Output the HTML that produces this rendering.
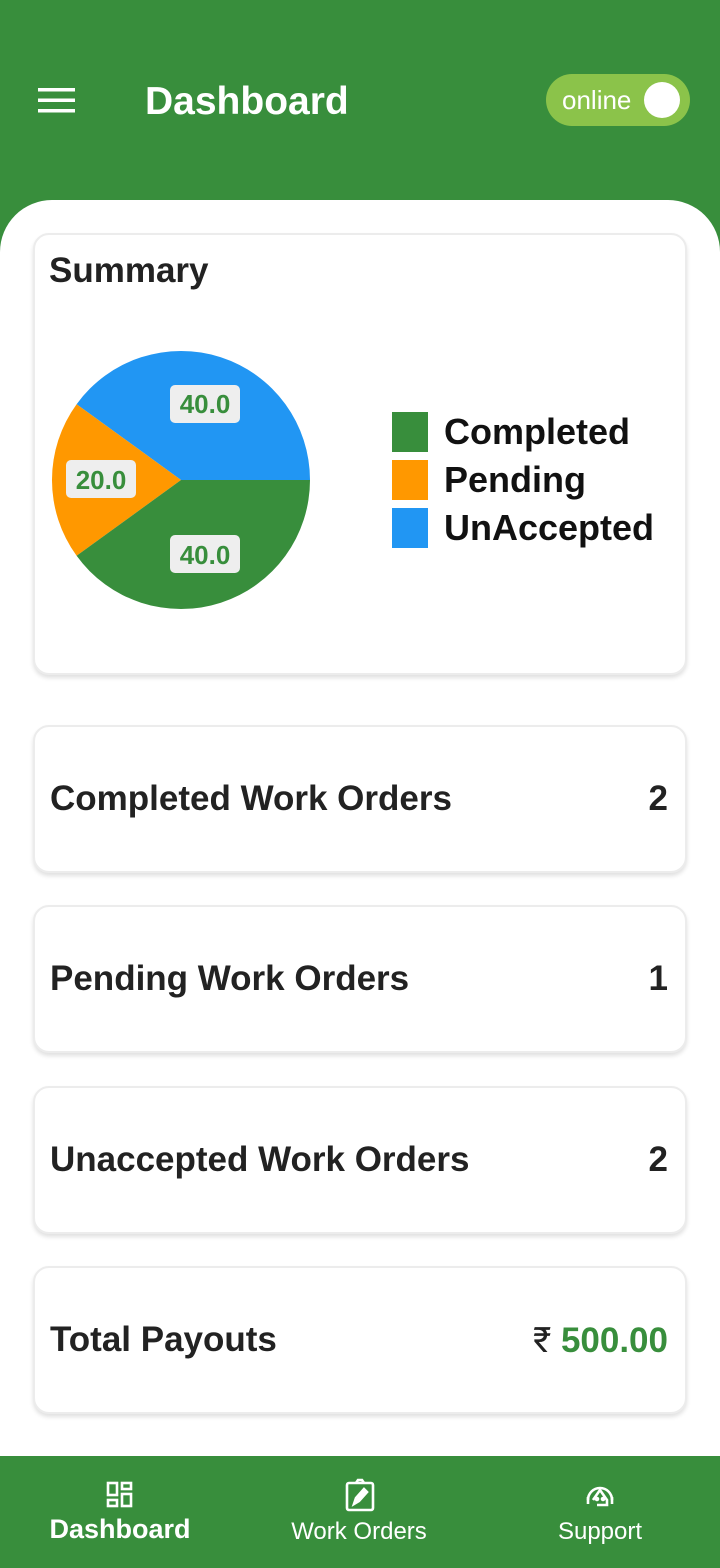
<!DOCTYPE html>
<html><head><meta charset="utf-8"><style>
*{margin:0;padding:0;box-sizing:border-box}
body{width:720px;height:1568px;background:#388E3C;font-family:"Liberation Sans",Roboto,sans-serif;position:relative;overflow:hidden}
.panel{position:absolute;left:0;top:200px;width:720px;height:1256px;background:#fff;border-radius:52px 52px 0 0}
.card{position:absolute;left:33px;width:654px;background:#fff;border:2px solid #ececec;border-radius:16px;box-shadow:0 3px 4px rgba(0,0,0,.12)}
.row{display:flex;align-items:center;justify-content:space-between;padding:0 17px 0 15px;font-size:35px;font-weight:bold;color:#222;height:144px}
.nav{position:absolute;left:0;top:1456px;width:720px;height:112px;background:#388E3C;color:#fff}
.nav div{position:absolute;text-align:center;width:240px}
</style></head><body>
<svg style="position:absolute;left:38px;top:88px" width="37" height="26"><rect y="0" width="37" height="3.5" fill="#fff"/><rect y="10.5" width="37" height="3.5" fill="#fff"/><rect y="21" width="37" height="3.5" fill="#fff"/></svg>
<div style="position:absolute;left:145px;top:80px;color:#fff;font-size:39px;font-weight:bold">Dashboard</div>
<div style="position:absolute;left:546px;top:74px;width:144px;height:52px;border-radius:26px;background:#8BC34A"><span style="position:absolute;left:16px;top:11px;color:#fff;font-size:26px">online</span><span style="position:absolute;left:98px;top:8px;width:36px;height:36px;border-radius:50%;background:#fff"></span></div>
<div class="panel"></div>
<div class="card" style="top:233px;height:442px">
<div style="position:absolute;left:14px;top:16px;font-size:35px;font-weight:bold;color:#222">Summary</div>
<svg style="position:absolute;left:-2px;top:-2px" width="654" height="442">
<path d="M148 247 L277 247 A129 129 0 0 0 43.6 171.2 Z" fill="#2196F3"/>
<path d="M148 247 L43.6 171.2 A129 129 0 0 0 43.6 322.8 Z" fill="#FF9800"/>
<path d="M148 247 L43.6 322.8 A129 129 0 0 0 277 247 Z" fill="#388E3C"/>
<rect x="137" y="152" width="70" height="38" rx="5" fill="#eee"/><text x="172" y="180" text-anchor="middle" font-size="26" font-weight="bold" fill="#388E3C" font-family="Liberation Sans">40.0</text>
<rect x="33" y="227" width="70" height="38" rx="5" fill="#eee"/><text x="68" y="256" text-anchor="middle" font-size="26" font-weight="bold" fill="#388E3C" font-family="Liberation Sans">20.0</text>
<rect x="137" y="302" width="70" height="38" rx="5" fill="#eee"/><text x="172" y="331" text-anchor="middle" font-size="26" font-weight="bold" fill="#388E3C" font-family="Liberation Sans">40.0</text>
<rect x="359" y="179" width="36" height="40" fill="#388E3C"/><rect x="359" y="227" width="36" height="40" fill="#FF9800"/><rect x="359" y="275" width="36" height="40" fill="#2196F3"/>
<g font-size="36" font-weight="bold" fill="#111" font-family="Liberation Sans"><text x="411" y="211">Completed</text><text x="411" y="259">Pending</text><text x="411" y="307">UnAccepted</text></g>
</svg></div>
<div class="card" style="top:725px"><div class="row"><span>Completed Work Orders</span><span>2</span></div></div>
<div class="card" style="top:905px"><div class="row"><span>Pending Work Orders</span><span>1</span></div></div>
<div class="card" style="top:1086px"><div class="row"><span>Unaccepted Work Orders</span><span>2</span></div></div>
<div class="card" style="top:1266px"><div class="row"><span>Total Payouts</span><span><span style="color:#222;font-weight:normal">₹</span> <span style="color:#388E3C">500.00</span></span></div></div>
<div class="nav">
<svg style="position:absolute;left:106px;top:25px" width="28" height="28" fill="none" stroke="#fff" stroke-width="2.6"><rect x="2" y="2" width="9" height="12"/><rect x="16" y="2" width="9" height="6"/><rect x="2" y="19" width="9" height="6"/><rect x="16" y="13" width="9" height="12"/></svg>
<div style="left:0;top:58px;font-size:27px;font-weight:bold">Dashboard</div>
<svg style="position:absolute;left:345px;top:22px" width="30" height="34" fill="none" stroke="#fff" stroke-width="2.6"><rect x="2" y="5" width="26" height="27" rx="2"/><path d="M11 5 L13 2 H17 L19 5" /><path d="M9 26 L11 20 L19 11 L22 14 L14 23 Z" fill="#fff"/></svg>
<div style="left:239px;top:62px;font-size:24px">Work Orders</div>
<svg style="position:absolute;left:584px;top:24px" width="32" height="32" fill="none" stroke="#fff" stroke-width="2.6"><path d="M4 20 A12 12 0 0 1 28 20"/><path d="M4 17 V24 M28 17 V24"/><path d="M9 20 L16 10 L23 20 V25 H13"/><circle cx="13" cy="19" r="1" fill="#fff"/><circle cx="19" cy="19" r="1" fill="#fff"/></svg>
<div style="left:480px;top:62px;font-size:24px">Support</div>
</div>
</body></html>
